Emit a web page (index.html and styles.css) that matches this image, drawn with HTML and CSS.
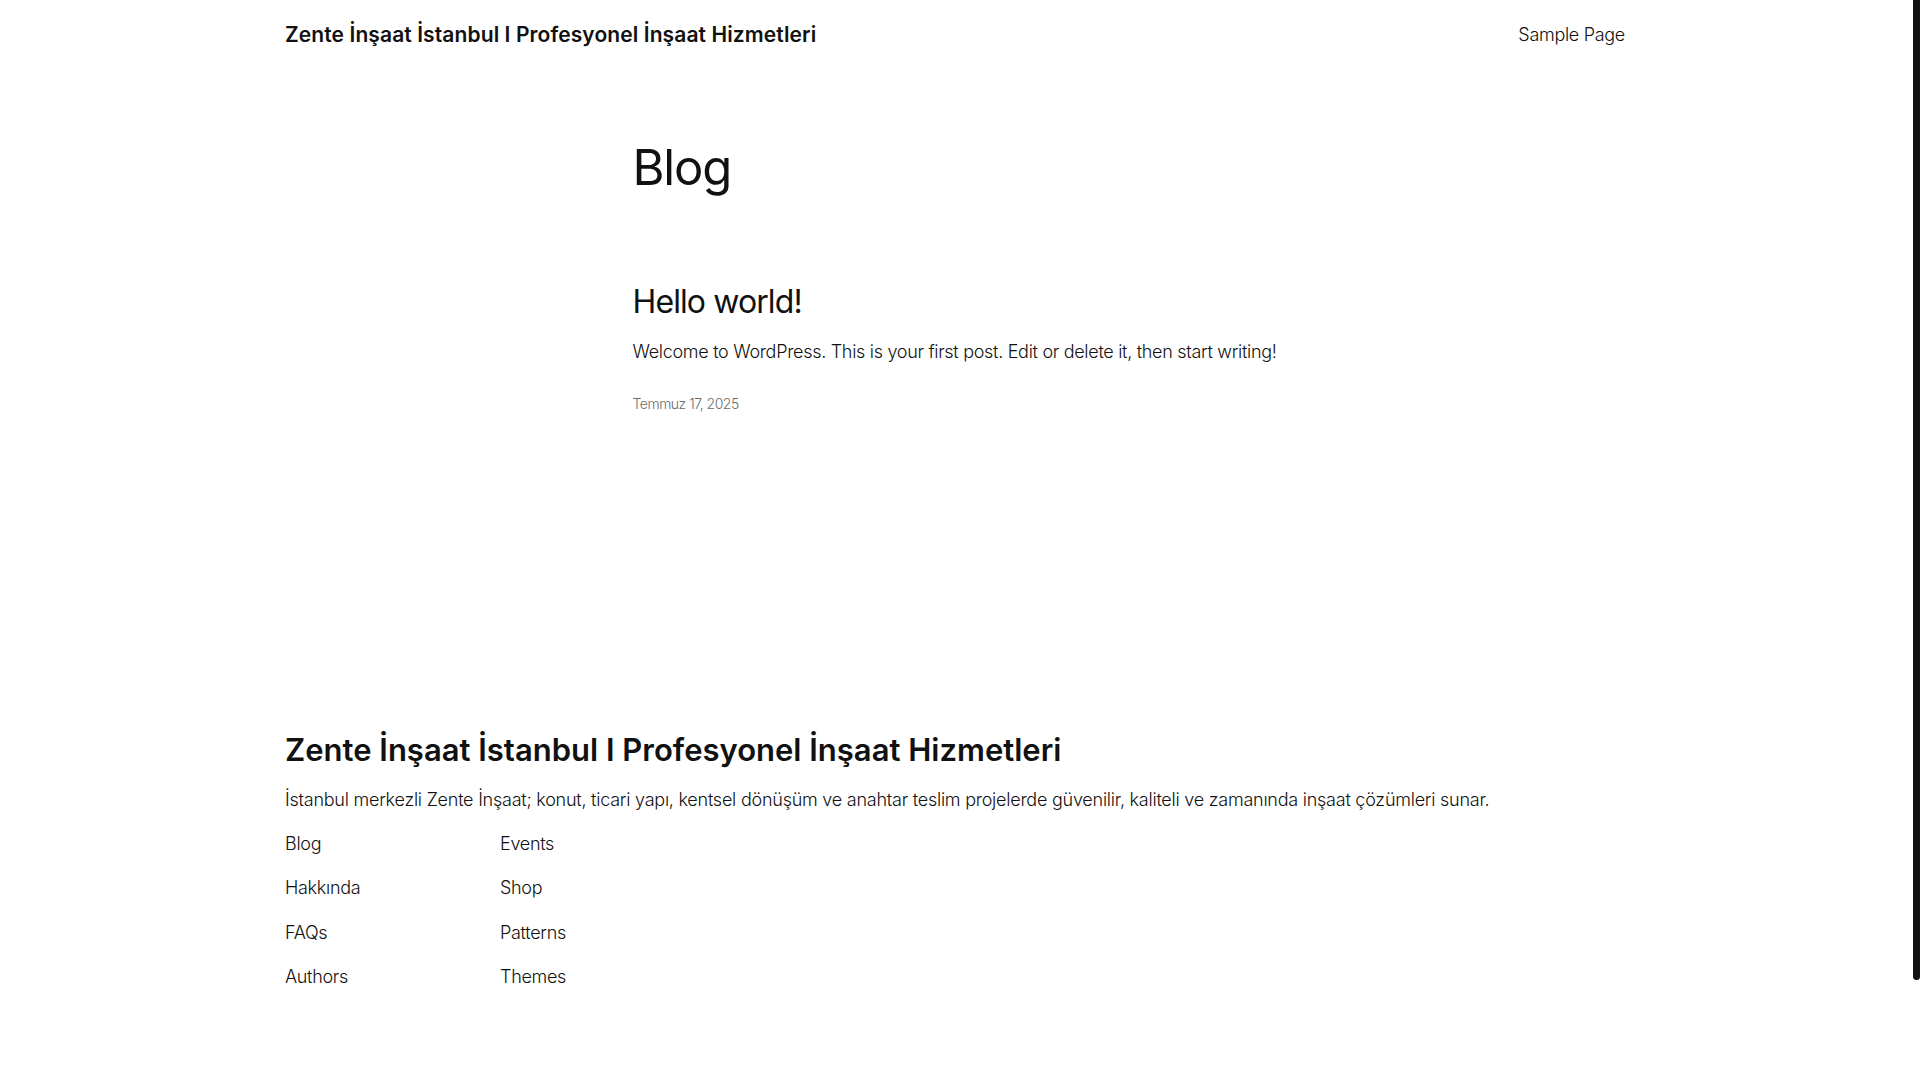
FILE: index.html
```html
<!DOCTYPE html>
<html lang="tr">
<head>
<meta charset="utf-8">
<title>Blog – Zente İnşaat İstanbul I Profesyonel İnşaat Hizmetleri</title>
<link rel="stylesheet" href="styles.css">
</head>
<body>
<header class="site-header">
  <div class="wide row">
    <a class="site-title" href="#">Zente İnşaat İstanbul I Profesyonel İnşaat Hizmetleri</a>
    <nav class="nav"><a href="#">Sample Page</a></nav>
  </div>
</header>
<main class="main">
  <div class="content">
    <h1 class="page-title">Blog</h1>
    <article class="post">
      <h2 class="post-title"><a href="#">Hello world!</a></h2>
      <p class="excerpt">Welcome to WordPress. This is your first post. Edit or delete it, then start writing!</p>
      <div class="date">Temmuz 17, 2025</div>
    </article>
  </div>
</main>
<footer class="site-footer">
  <div class="wide">
    <h2 class="footer-title"><a href="#">Zente İnşaat İstanbul I Profesyonel İnşaat Hizmetleri</a></h2>
    <p class="footer-desc">İstanbul merkezli Zente İnşaat; konut, ticari yapı, kentsel dönüşüm ve anahtar teslim projelerde güvenilir, kaliteli ve zamanında inşaat çözümleri sunar.</p>
    <div class="footer-links">
      <ul class="link-col">
        <li><a href="#">Blog</a></li>
        <li><a href="#">Hakkında</a></li>
        <li><a href="#">FAQs</a></li>
        <li><a href="#">Authors</a></li>
      </ul>
      <ul class="link-col">
        <li><a href="#">Events</a></li>
        <li><a href="#">Shop</a></li>
        <li><a href="#">Patterns</a></li>
        <li><a href="#">Themes</a></li>
      </ul>
    </div>
  </div>
</footer>
<div class="scroll-thumb"></div>
</body>
</html>
```

FILE: styles.css
```css
html, body {
  margin: 0;
  padding: 0;
  background: #ffffff;
}
body {
  margin-right: 10px;
  font-family: Inter, "Noto Sans", "Liberation Sans", sans-serif;
  font-weight: 300;
  color: #111111;
  font-size: 18px;
  line-height: 1.6;
  letter-spacing: -0.3px;
}
a {
  color: inherit;
  text-decoration: none;
}
.wide {
  max-width: 1340px;
  margin: 0 auto;
}
.row {
  display: flex;
  justify-content: space-between;
  align-items: center;
}
.site-header {
  padding: 21px 0 19px;
}
.site-title {
  font-size: 21px;
  font-weight: 600;
  line-height: 28px;
  letter-spacing: 0.1px;
}
.nav a {
  font-size: 18px;
  line-height: 28px;
  letter-spacing: -0.3px;
}
.content {
  max-width: 645px;
  margin: 0 auto;
}
.page-title {
  margin: 70px 0 0;
  font-size: 49px;
  font-weight: 400;
  line-height: 58.8px;
  letter-spacing: -1.2px;
}
.post-title {
  margin: 85px 0 0;
  font-size: 32px;
  font-weight: 400;
  line-height: 38.4px;
  letter-spacing: -0.9px;
}
.excerpt {
  margin: 17px 0 0;
  font-size: 18px;
  line-height: 28.8px;
  letter-spacing: -0.3px;
}
.date {
  margin-top: 26px;
  font-size: 14px;
  line-height: 21px;
  color: #6b6b6b;
  letter-spacing: -0.5px;
}
.site-footer {
  padding: 314px 0 160px;
}
.footer-title {
  margin: 0;
  font-size: 31px;
  font-weight: 600;
  line-height: 43px;
  letter-spacing: 0;
}
.footer-desc {
  margin: 15px 0 0;
  font-size: 18px;
  line-height: 28.8px;
  letter-spacing: -0.24px;
}
.footer-links {
  display: flex;
  margin-top: 15px;
}
.link-col {
  list-style: none;
  margin: 0;
  padding: 0;
  width: 215px;
  display: flex;
  flex-direction: column;
  gap: 15.8px;
}
.link-col li {
  font-size: 18px;
  line-height: 28.8px;
  letter-spacing: -0.3px;
}
.scroll-thumb {
  position: fixed;
  top: 0;
  right: 0;
  width: 7px;
  height: 980px;
  background: #111111;
  border-radius: 0 0 4px 4px;
}
```
